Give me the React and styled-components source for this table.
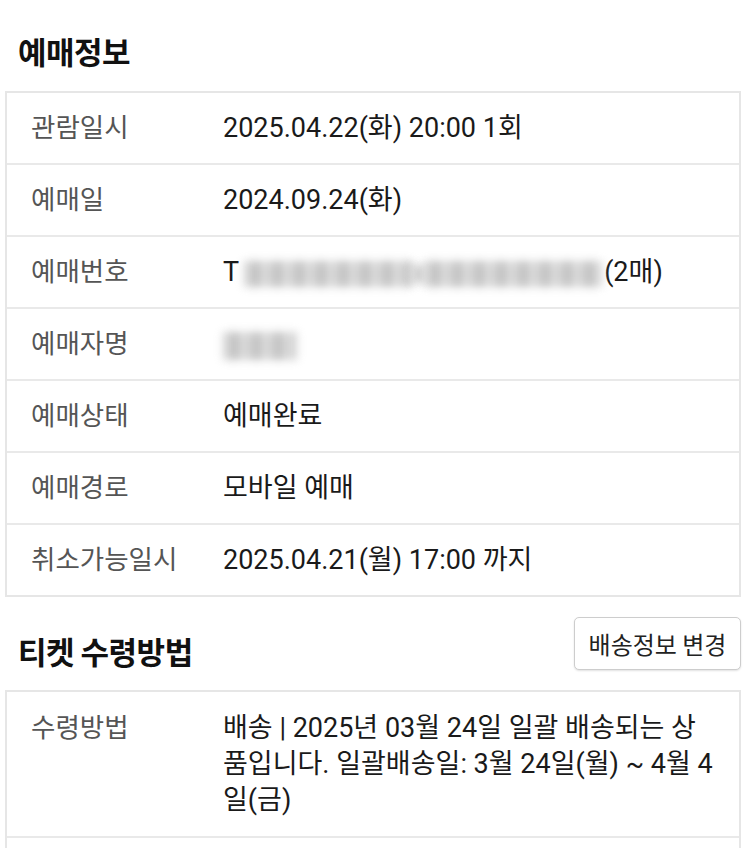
import React from "react";
import styled, { createGlobalStyle } from "styled-components";

const Global = createGlobalStyle`
  html, body { margin: 0; padding: 0; background: #fff; }
  body { font-family: Roboto, "Noto Sans CJK KR", sans-serif; }
`;

const Page = styled.div`
  width: 750px;
  padding: 24px 9px 0 5px;
  box-sizing: border-box;
`;

const SectionHead = styled.div`
  display: flex;
  align-items: center;
  justify-content: space-between;
  height: ${(p) => p.$h}px;
  margin-top: ${(p) => p.$mt || 0}px;
  margin-bottom: ${(p) => p.$mb || 0}px;
`;

const Title = styled.h2`
  margin: 0 0 0 13px;
  padding-top: ${(p) => p.$shift || 0}px;
  font-size: 31px;
  font-weight: 700;
  color: #111;
  font-family: "Noto Sans CJK KR", sans-serif;
  letter-spacing: -0.5px;
`;

const Button = styled.button`
  width: 167px;
  height: 53px;
  border: 1.5px solid #cdcdcd;
  border-radius: 5px;
  background: #fff;
  box-shadow: 0 1px 2px rgba(0, 0, 0, 0.12);
  font-family: "Noto Sans CJK KR", sans-serif;
  font-size: 24px;
  color: #222;
  padding: 0;
`;

const Table = styled.div`
  border: 2px solid #e6e6e6;
  display: flex;
  flex-direction: column;
`;

const Row = styled.div`
  display: grid;
  grid-template-columns: 216px 1fr;
  align-items: ${(p) => (p.$top ? "start" : "center")};
  min-height: 70px;
  padding: ${(p) => (p.$top ? "18px 0" : "0")};
  border-top: ${(p) => (p.$first ? "none" : "2px solid #e9e9e9")};
`;

const Label = styled.div`
  padding-left: 24px;
  font-size: 26.5px;
  color: #555;
  line-height: 36px;
`;

const Value = styled.div`
  font-size: 27px;
  color: #1a1a1a;
  line-height: 36px;
  padding-right: 24px;
  word-break: break-all;
`;

const Blur = styled.span`
  display: inline-block;
  filter: blur(4px);
  width: ${(p) => p.$w}px;
  height: ${(p) => p.$h || 26}px;
  vertical-align: middle;
  background: repeating-linear-gradient(
    90deg,
    #c9c9c9 0 9px,
    #a9a9a9 9px 15px,
    #d2d2d2 15px 22px
  );
  opacity: 0.8;
  margin: ${(p) => p.$m || "0"};
`;

const rows1 = [
  ["관람일시", "2025.04.22(화) 20:00 1회"],
  ["예매일", "2024.09.24(화)"],
  [
    "예매번호",
    <>
      T<Blur $w={168} $m="0 0 0 5px" />
      <Blur $w={12} $h={18} $m="0 0 0 0" />
      <Blur $w={178} $m="0 2px 0 0" />
      (2매)
    </>,
  ],
  ["예매자명", <Blur $w={74} $h={28} />],
  ["예매상태", "예매완료"],
  ["예매경로", "모바일 예매"],
  ["취소가능일시", "2025.04.21(월) 17:00 까지"],
];

export default function App() {
  return (
    <Page>
      <Global />
      <SectionHead $h={52} $mb={15}>
        <Title>예매정보</Title>
      </SectionHead>
      <Table>
        {rows1.map(([l, v], i) => (
          <Row key={l} $first={i === 0}>
            <Label>{l}</Label>
            <Value>{v}</Value>
          </Row>
        ))}
      </Table>
      <SectionHead $h={53} $mt={20} $mb={20}>
        <Title $shift={14}>티켓 수령방법</Title>
        <Button>배송정보 변경</Button>
      </SectionHead>
      <Table>
        <Row $first $top>
          <Label>수령방법</Label>
          <Value>
            배송 | 2025년 03월 24일 일괄 배송되는 상품입니다. 일괄배송일: 3월
            24일(월) ~ 4월 4일(금)
          </Value>
        </Row>
        <Row />
      </Table>
    </Page>
  );
}
